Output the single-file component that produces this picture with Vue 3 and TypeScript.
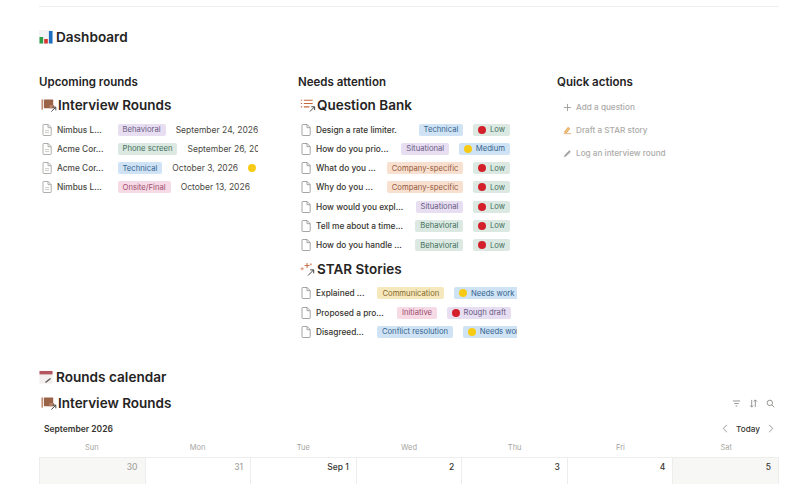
<script setup lang="ts">
type Tag = { label: string; tone: string; dot?: string }
type Row = { title: string; tags: Tag[]; date?: string; mark?: boolean }

const rounds: Row[] = [
  { title: 'Nimbus L...', tags: [{ label: 'Behavioral', tone: 'purple' }], date: 'September 24, 2026' },
  { title: 'Acme Cor...', tags: [{ label: 'Phone screen', tone: 'green' }], date: 'September 26, 2026' },
  { title: 'Acme Cor...', tags: [{ label: 'Technical', tone: 'blue' }], date: 'October 3, 2026', mark: true },
  { title: 'Nimbus L...', tags: [{ label: 'Onsite/Final', tone: 'pink' }], date: 'October 13, 2026' },
]
const low: Tag = { label: 'Low', tone: 'green', dot: 'red' }
const questions: Row[] = [
  { title: 'Design a rate limiter.', tags: [{ label: 'Technical', tone: 'blue' }, low] },
  { title: 'How do you prio...', tags: [{ label: 'Situational', tone: 'purple' }, { label: 'Medium', tone: 'blue', dot: 'yellow' }] },
  { title: 'What do you ...', tags: [{ label: 'Company-specific', tone: 'orange' }, low] },
  { title: 'Why do you ...', tags: [{ label: 'Company-specific', tone: 'orange' }, low] },
  { title: 'How would you expl...', tags: [{ label: 'Situational', tone: 'purple' }, low] },
  { title: 'Tell me about a time...', tags: [{ label: 'Behavioral', tone: 'green' }, low] },
  { title: 'How do you handle ...', tags: [{ label: 'Behavioral', tone: 'green' }, low] },
]
const stories: Row[] = [
  { title: 'Explained ...', tags: [{ label: 'Communication', tone: 'yellow' }, { label: 'Needs work', tone: 'blue', dot: 'yellow' }] },
  { title: 'Proposed a pro...', tags: [{ label: 'Initiative', tone: 'pink' }, { label: 'Rough draft', tone: 'purple', dot: 'red' }] },
  { title: 'Disagreed...', tags: [{ label: 'Conflict resolution', tone: 'blue' }, { label: 'Needs work', tone: 'blue', dot: 'yellow' }] },
]
const weekdays = ['Sun', 'Mon', 'Tue', 'Wed', 'Thu', 'Fri', 'Sat']
const days = [
  { n: '30', muted: true, weekend: true },
  { n: '31', muted: true, weekend: false },
  { n: 'Sep 1', muted: false, weekend: false },
  { n: '2', muted: false, weekend: false },
  { n: '3', muted: false, weekend: false },
  { n: '4', muted: false, weekend: false },
  { n: '5', muted: false, weekend: true },
]
</script>

<template>
  <div class="page">
    <div class="rule"></div>

    <h1 class="heading dash-head">
      <svg class="head-icon" viewBox="0 0 14 14">
        <rect width="14" height="14" fill="#f1f3f5" />
        <rect x="0.5" y="7" width="3.6" height="6.5" fill="#2f9e44" />
        <rect x="5.2" y="9" width="3.6" height="4.5" fill="#d9342b" />
        <rect x="9.9" y="1" width="3.6" height="12.5" fill="#1e6fc2" />
      </svg>
      Dashboard
    </h1>

    <div class="columns">
      <section class="column">
        <h2 class="col-title">Upcoming rounds</h2>
        <h3 class="db-title">
          <svg class="db-icon" viewBox="0 0 17 15">
            <rect x="0.5" y="1.5" width="1.4" height="11" fill="#b9785a" />
            <rect x="3" y="1.5" width="10" height="9.5" rx="0.8" fill="#9a6246" />
            <rect x="9" y="7.5" width="5" height="3.5" fill="#b58167" />
            <path d="M11 14.5 L15.6 10 M12.4 9.8 H15.8 V13.2" fill="none" stroke="#3b3b3b" stroke-width="1" />
          </svg>
          Interview Rounds
        </h3>
        <div v-for="(r, i) in rounds" :key="i" class="row">
          <svg class="doc" viewBox="0 0 10 12">
            <path d="M1 1.2 a.7 .7 0 0 1 .7-.7 H6.2 L9.2 3.5 V10.8 a.7 .7 0 0 1 -.7 .7 H1.7 a.7 .7 0 0 1 -.7 -.7 Z M6 .7 V3.7 H9" fill="none" stroke="#9b9a97" stroke-width=".8" />
            <path d="M3 6.6 H7 M3 8.6 H7" stroke="#b5b4b1" stroke-width=".7" />
          </svg>
          <span class="row-title fixed">{{ r.title }}</span>
          <span v-for="t in r.tags" :key="t.label" class="tag" :class="t.tone">{{ t.label }}</span>
          <span class="date">{{ r.date }}</span>
          <span v-if="r.mark" class="dot yellow-dot mark"></span>
        </div>
      </section>

      <section class="column">
        <h2 class="col-title">Needs attention</h2>
        <h3 class="db-title">
          <svg class="db-icon" viewBox="0 0 17 15">
            <g stroke="#c4673d" stroke-width="1.1">
              <path d="M0.8 2.5 H2.2 M0.8 6 H2.2 M0.8 9.5 H2.2" />
              <path d="M4 2.5 H13.5 M4 6 H13.5 M4 9.5 H10" />
            </g>
            <path d="M10.5 14.5 L15.4 9.6 M12 9.4 H15.6 V13" fill="none" stroke="#3b3b3b" stroke-width="1" />
          </svg>
          Question Bank
        </h3>
        <div v-for="(r, i) in questions" :key="i" class="row">
          <svg class="doc plain" viewBox="0 0 10 12">
            <path d="M1 1.2 a.7 .7 0 0 1 .7-.7 H6.2 L9.2 3.5 V10.8 a.7 .7 0 0 1 -.7 .7 H1.7 a.7 .7 0 0 1 -.7 -.7 Z M6 .7 V3.7 H9" fill="none" stroke="#8f8e8b" stroke-width=".8" />
          </svg>
          <span class="row-title grow">{{ r.title }}</span>
          <span class="tag-group">
            <span v-for="t in r.tags" :key="t.label" class="tag" :class="t.tone">
              <span v-if="t.dot" class="dot" :class="t.dot + '-dot'"></span>{{ t.label }}
            </span>
          </span>
        </div>

        <h3 class="db-title story-title">
          <svg class="db-icon" viewBox="0 0 17 15">
            <g fill="none" stroke-width="1">
              <path d="M7.5 1 V6.5 M4.8 3.8 H10.2" stroke="#c4673d" />
              <path d="M2.2 5.5 V9 M0.5 7.2 H4" stroke="#d98a6c" />
              <path d="M11.5 1.5 V3.5 M10.5 2.5 H12.5" stroke="#d98a6c" />
            </g>
            <path d="M8.5 14.5 L14.4 8.6 M10.8 8.4 H14.6 V12.2" fill="none" stroke="#3b3b3b" stroke-width="1" />
          </svg>
          STAR Stories
        </h3>
        <div v-for="(r, i) in stories" :key="i" class="row">
          <svg class="doc plain" viewBox="0 0 10 12">
            <path d="M1 1.2 a.7 .7 0 0 1 .7-.7 H6.2 L9.2 3.5 V10.8 a.7 .7 0 0 1 -.7 .7 H1.7 a.7 .7 0 0 1 -.7 -.7 Z M6 .7 V3.7 H9" fill="none" stroke="#8f8e8b" stroke-width=".8" />
          </svg>
          <span class="row-title">{{ r.title }}</span>
          <span class="story-tags">
            <span v-for="t in r.tags" :key="t.label" class="tag" :class="t.tone">
              <span v-if="t.dot" class="dot" :class="t.dot + '-dot'"></span>{{ t.label }}
            </span>
          </span>
        </div>
      </section>

      <section class="column">
        <h2 class="col-title">Quick actions</h2>
        <div class="actions">
          <div class="action">
            <svg class="act-icon" viewBox="0 0 10 10"><path d="M5 1 V9 M1 5 H9" stroke="#a5a4a1" stroke-width="1.1" /></svg>
            Add a question
          </div>
          <div class="action">
            <svg class="act-icon" viewBox="0 0 10 10">
              <path d="M1 8.5 H9 M1.5 7 L5.5 1.5 L7.5 3 L4 7.4 Z" fill="#f3c77a" stroke="#d98a3a" stroke-width=".7" />
            </svg>
            Draft a STAR story
          </div>
          <div class="action">
            <svg class="act-icon" viewBox="0 0 10 10">
              <path d="M1 9 L1.8 6.8 L7 1.5 L8.6 3 L3.3 8.2 Z" fill="#a5a4a1" />
            </svg>
            Log an interview round
          </div>
        </div>
      </section>
    </div>

    <h1 class="heading cal-head">
      <svg class="head-icon" viewBox="0 0 14 14">
        <rect x="0.5" y="0.5" width="13" height="13" fill="#f2efec" />
        <rect x="0.5" y="1" width="13" height="3.4" fill="#b5555f" />
        <path d="M6.5 12.5 L11.5 8.5" stroke="#555" stroke-width="1.2" />
      </svg>
      Rounds calendar
    </h1>

    <div class="cal-db">
      <h3 class="db-title cal-db-title">
        <svg class="db-icon" viewBox="0 0 17 15">
          <rect x="0.5" y="1.5" width="1.4" height="11" fill="#b9785a" />
          <rect x="3" y="1.5" width="10" height="9.5" rx="0.8" fill="#9a6246" />
          <rect x="9" y="7.5" width="5" height="3.5" fill="#b58167" />
          <path d="M11 14.5 L15.6 10 M12.4 9.8 H15.8 V13.2" fill="none" stroke="#3b3b3b" stroke-width="1" />
        </svg>
        Interview Rounds
      </h3>
      <div class="tools">
        <svg viewBox="0 0 10 10" class="tool"><path d="M1 2.2 H9 M2.5 5 H7.5 M4 7.8 H6" stroke="#807f7c" stroke-width=".9" /></svg>
        <svg viewBox="0 0 10 10" class="tool"><path d="M3 1 V9 M1.3 7.2 L3 9 L4.7 7.2 M7 9 V1 M5.3 2.8 L7 1 L8.7 2.8" fill="none" stroke="#807f7c" stroke-width=".9" /></svg>
        <svg viewBox="0 0 10 10" class="tool"><circle cx="4.3" cy="4.3" r="3" fill="none" stroke="#807f7c" stroke-width=".9" /><path d="M6.5 6.5 L9.2 9.2" stroke="#807f7c" stroke-width=".9" /></svg>
      </div>
    </div>

    <div class="cal-bar">
      <span class="month">September 2026</span>
      <span class="nav">
        <svg viewBox="0 0 6 10" class="chev"><path d="M5 1 L1 5 L5 9" fill="none" stroke="#807f7c" stroke-width=".9" /></svg>
        <span class="today">Today</span>
        <svg viewBox="0 0 6 10" class="chev"><path d="M1 1 L5 5 L1 9" fill="none" stroke="#807f7c" stroke-width=".9" /></svg>
      </span>
    </div>

    <div class="weekdays">
      <span v-for="d in weekdays" :key="d">{{ d }}</span>
    </div>
    <div class="grid">
      <div v-for="d in days" :key="d.n" class="cell" :class="{ weekend: d.weekend, muted: d.muted }">{{ d.n }}</div>
    </div>
  </div>
</template>

<style scoped>
.page {
  box-sizing: border-box;
  width: 800px;
  height: 484px;
  overflow: hidden;
  padding: 6px 21px 0 39px;
  font-family: Inter, "Liberation Sans", sans-serif;
  color: #37352f;
  background: #fff;
}
.rule {
  height: 1px;
  background: #eeeeec;
}
.heading {
  display: flex;
  align-items: center;
  gap: 3px;
  margin: 0;
  font-size: 13.6px;
  line-height: 20px;
  font-weight: 600;
  color: #25241f;
}
.dash-head {
  margin-top: 20px;
}
.head-icon {
  width: 14px;
  height: 14px;
  flex: none;
}
.columns {
  display: grid;
  grid-template-columns: repeat(3, 219px);
  column-gap: 40px;
  margin-top: 26px;
  height: 282px;
}
.column {
  min-width: 0;
}
.col-title {
  margin: 0;
  font-size: 11.5px;
  line-height: 18px;
  font-weight: 600;
  color: #25241f;
}
.db-title {
  display: flex;
  align-items: center;
  gap: 1px;
  margin: 5px 0 6px 2px;
  font-size: 13.5px;
  line-height: 18px;
  font-weight: 600;
  color: #25241f;
}
.db-icon {
  width: 16px;
  height: 14px;
  flex: none;
}
.story-title {
  margin-top: 5px;
  margin-bottom: 6px;
}
.row {
  display: flex;
  align-items: center;
  height: 19.25px;
  white-space: nowrap;
  overflow: hidden;
  font-size: 8.3px;
  padding-left: 3px;
  color: #37352f;
}
.doc {
  width: 10px;
  height: 12px;
  flex: none;
  margin-right: 5px;
}
.row-title {
  font-weight: 500;
  margin-right: 13px;
  flex: none;
}
.row-title.fixed {
  width: 60.5px;
  margin-right: 0;
  color: #4a4944;
}
.row-title.grow {
  flex: 1;
  margin-right: 0;
}
.tag-group {
  display: flex;
  gap: 10px;
  flex: none;
  margin-right: 7px;
}
.story-tags {
  display: flex;
  gap: 10px;
  flex: none;
}
.tag {
  display: inline-flex;
  align-items: center;
  height: 12px;
  padding: 0 5px;
  border-radius: 2px;
  font-size: 7.7px;
  flex: none;
}
.purple { background: #e7dff1; color: #6b5a85; }
.green { background: #dbe9e2; color: #44705c; }
.blue { background: #cfe3f5; color: #35648f; }
.pink { background: #f6dbe6; color: #a04d6e; }
.orange { background: #f7e0d0; color: #96583a; }
.yellow { background: #f6e8bd; color: #85692c; }
.date {
  margin-left: 10px;
  font-size: 8.5px;
  color: #4a4944;
  flex: none;
}
.dot {
  display: inline-block;
  width: 8px;
  height: 8px;
  border-radius: 50%;
  margin-right: 3.5px;
  flex: none;
}
.red-dot { background: #d3202a; }
.yellow-dot { background: #f7cb15; }
.mark {
  margin-left: 10px;
  margin-right: 0;
}
.actions {
  margin-top: 7px;
  display: flex;
  flex-direction: column;
  gap: 5px;
}
.action {
  display: flex;
  align-items: center;
  gap: 4px;
  height: 18px;
  padding-left: 6px;
  font-size: 8.2px;
  font-weight: 500;
  color: #acaba8;
}
.act-icon {
  width: 9px;
  height: 9px;
  flex: none;
}
.cal-head {
  margin-top: 12px;
}
.cal-db {
  display: flex;
  align-items: center;
  justify-content: space-between;
  margin-top: 7px;
}
.cal-db-title {
  margin: 0 0 0 2px;
}
.tools {
  display: flex;
  gap: 8px;
  padding-right: 4px;
}
.tool {
  width: 9px;
  height: 9px;
}
.cal-bar {
  display: flex;
  align-items: center;
  justify-content: space-between;
  margin-top: 7.5px;
  height: 18px;
  padding: 0 5px 0 5px;
}
.month {
  font-size: 8.5px;
  font-weight: 600;
  color: #37352f;
}
.nav {
  display: flex;
  align-items: center;
  gap: 8px;
}
.chev {
  width: 6px;
  height: 9px;
}
.today {
  font-size: 8.2px;
  font-weight: 500;
  color: #37352f;
}
.weekdays {
  display: grid;
  grid-template-columns: repeat(7, 1fr);
  height: 19.5px;
  line-height: 20px;
  text-align: center;
  font-size: 7.5px;
  color: #a5a4a1;
}
.grid {
  display: grid;
  grid-template-columns: repeat(7, 1fr);
  border-top: 1px solid #ededeb;
  border-left: 1px solid #ededeb;
}
.cell {
  height: 40px;
  padding: 3px 7px 0 0;
  text-align: right;
  font-size: 8.5px;
  font-weight: 500;
  line-height: 13px;
  color: #37352f;
  border-right: 1px solid #ededeb;
}
.weekend {
  background: #f7f7f5;
}
.muted {
  color: #a5a4a1;
}
</style>
